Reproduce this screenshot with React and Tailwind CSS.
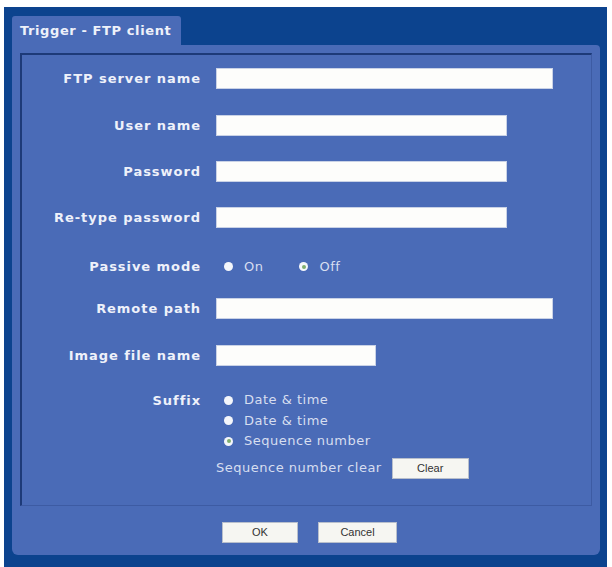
const FONT = { fontFamily: '"DejaVu Sans", Verdana, sans-serif' };

function Radio({ checked }) {
  return (
    <span className="w-[9px] h-[9px] rounded-full bg-[#f4f6fb] flex items-center justify-center shrink-0">
      {checked && <span className="w-[4px] h-[4px] rounded-full bg-[#7fae6e]" />}
    </span>
  );
}

function Label({ children }) {
  return (
    <div className="w-[194px] shrink-0 pr-[15px] text-right text-[13px] font-bold tracking-[0.95px] text-[#eef1fa] leading-none">
      {children}
    </div>
  );
}

function TextRow({ label, width, mt }) {
  return (
    <div className={`flex items-center h-[21px] ${mt}`}>
      <Label>{label}</Label>
      <div className={`h-[21px] ${width} bg-[#fdfdfb] border border-[#c9d2e6]`} />
    </div>
  );
}

function Option({ checked, children, className = "" }) {
  return (
    <div className={`flex items-center gap-[11px] ${className}`}>
      <Radio checked={checked} />
      <span>{children}</span>
    </div>
  );
}

function Button({ children, w }) {
  return (
    <button
      className={`${w} h-[21px] bg-[#f6f6f2] border border-[#b8bfcc] text-[11px] text-[#333] leading-none`}
      style={{ fontFamily: '"Liberation Sans", Arial, sans-serif' }}
    >
      {children}
    </button>
  );
}

export default function App() {
  return (
    <div className="w-[612px] h-[567px] bg-white pt-[7px] pl-[4px] pr-[5px]" style={FONT}>
      <div className="h-[560px] bg-[#0c438e] flex flex-col pt-[9px] pl-[8px] pr-[7px]">
        {/* tab */}
        <div className="w-[169px] h-[29px] bg-[#4a6bb7] rounded-t-[3px] flex items-center pl-[8px] text-[13px] font-bold tracking-[0.6px] text-[#eef1fa]">
          Trigger - FTP client
        </div>

        {/* panel */}
        <div className="h-[510px] bg-[#4a6bb7] rounded-b-[6px] rounded-tr-[4px] pt-[8px] px-[8px] flex flex-col">
          <div className="h-[453px] border-t-2 border-l-2 border-[#1d3a78] border-r border-b border-r-[#3d5ba3] border-b-[#3d5ba3] flex flex-col pt-[13px]">
            <TextRow label="FTP server name" width="w-[337px]" mt="" />
            <TextRow label="User name" width="w-[291px]" mt="mt-[26px]" />
            <TextRow label="Password" width="w-[291px]" mt="mt-[25px]" />
            <TextRow label="Re-type password" width="w-[291px]" mt="mt-[25px]" />

            <div className="flex items-center h-[21px] mt-[28px] text-[13px] tracking-[0.5px] text-[#d7def0]">
              <Label>Passive mode</Label>
              <Option className="pl-[8px]">On</Option>
              <Option checked className="pl-[36px]">Off</Option>
            </div>

            <TextRow label="Remote path" width="w-[337px]" mt="mt-[21px]" />
            <TextRow label="Image file name" width="w-[160px]" mt="mt-[26px]" />

            <div className="flex mt-[24px]">
              <div className="h-[20px] flex items-center">
                <Label>Suffix</Label>
              </div>
              <div className="flex flex-col pl-[8px] text-[13px] tracking-[0.5px] text-[#d7def0]">
                <Option className="h-[20px]">Date &amp; time</Option>
                <Option className="h-[21px]">Date &amp; time</Option>
                <Option checked className="h-[20px]">Sequence number</Option>
              </div>
            </div>

            <div className="flex items-center h-[22px] mt-[6px] pl-[194px] gap-[10px]">
              <span className="text-[13px] tracking-[0.5px] text-[#d7def0]">Sequence number clear</span>
              <Button w="w-[77px]">Clear</Button>
            </div>
          </div>

          <div className="flex justify-center gap-[20px] mt-[16px] pl-[7px]">
            <Button w="w-[76px]">OK</Button>
            <Button w="w-[79px]">Cancel</Button>
          </div>
        </div>
      </div>
    </div>
  );
}
